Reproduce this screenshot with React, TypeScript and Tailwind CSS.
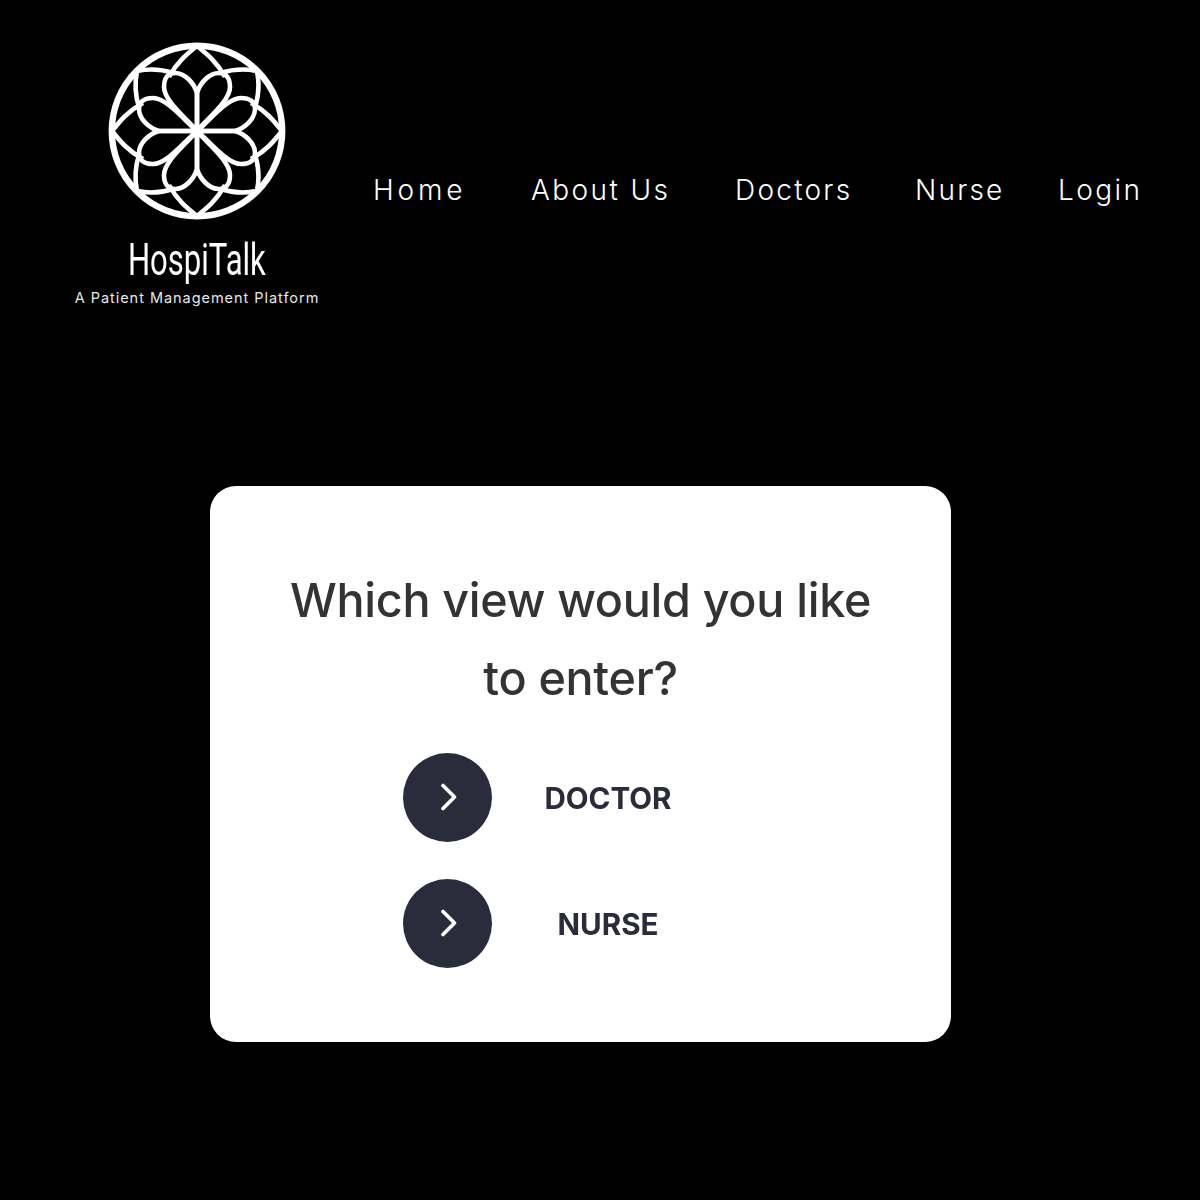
const petals = [0, 90, 180, 270];

function Logo() {
  return (
    <svg width="178" height="178" viewBox="-89 -89 178 178" fill="none" stroke="white" strokeWidth="4.6" strokeLinejoin="round" className="block">
      <circle cx="0" cy="0" r="85.2" strokeWidth="6.4" />
      {petals.map((r) =>
        [1, -1].map((s) => (
          <g key={`${r}${s}`} transform={`rotate(${r}) scale(${s},1)`}>
            <path d="M0 0 C-10 -12 -33 -30 -33 -44 C-33 -53 -29 -58 -22 -58 C-12 -58 -3 -48 0 -38 Z" />
            <path d="M0 -85 C-10 -77 -20 -69 -28 -54" />
            <path d="M-60 -60 C-50 -62 -36 -62 -24 -58" />
          </g>
        ))
      )}
    </svg>
  );
}

function Choice({ label }: { label: string }) {
  return (
    <div className="flex items-center">
      <div className="flex h-[89px] w-[89px] items-center justify-center rounded-full bg-[#2a2b3b]">
        <svg width="24" height="32" viewBox="0 0 24 32" fill="none" stroke="white" strokeWidth="3.6" strokeLinecap="round" strokeLinejoin="round" className="mb-[2px] ml-[3px] blur-[0.3px]">
          <path d="M6 4.5 L17.5 16 L6 27.5" />
        </svg>
      </div>
      <div className="mt-[2px] ml-[26px] w-[180px] text-center text-[29.6px] leading-none font-bold text-[#2a2b3b] blur-[0.4px]">{label}</div>
    </div>
  );
}

export default function App() {
  return (
    <div className="min-h-[1200px] bg-black font-['Inter',sans-serif]">
      <header className="flex items-start">
        <div className="ml-[75px] flex w-[244px] flex-col items-center pt-[42px]">
          <Logo />
          <div className="mt-[14px] h-[52px] origin-center scale-x-[0.69] font-['Roboto',sans-serif] text-[45px] leading-[52px] font-normal whitespace-nowrap text-white">HospiTalk</div>
          <div className="mt-[2px] font-['Inter',sans-serif] text-[14.5px] leading-5 tracking-[0.96px] whitespace-nowrap text-[#e8e8e8]">A Patient Management Platform</div>
        </div>
        <nav className="ml-[54px] flex pt-[170px] text-[28px] leading-10 font-light whitespace-nowrap text-white">
          <a className="w-[158px] tracking-[3.8px]">Home</a>
          <a className="w-[204px] tracking-[2.4px]">About Us</a>
          <a className="w-[180px] tracking-[2.25px]">Doctors</a>
          <a className="w-[143px] tracking-[2.2px]">Nurse</a>
          <a className="tracking-[2.4px]">Login</a>
        </nav>
      </header>
      <main className="ml-[210px] mt-[178px] flex h-[556px] w-[741px] flex-col rounded-[26px] bg-white pt-[75px]">
        <h1 className="text-center text-[46.7px] leading-[78px] font-medium tracking-[-0.3px] text-[#333333] blur-[0.4px]">
          Which view would you like
          <br />
          to enter?
        </h1>
        <div className="mt-[36px] ml-[193px] flex flex-col gap-[37px]">
          <Choice label="DOCTOR" />
          <Choice label="NURSE" />
        </div>
      </main>
    </div>
  );
}
